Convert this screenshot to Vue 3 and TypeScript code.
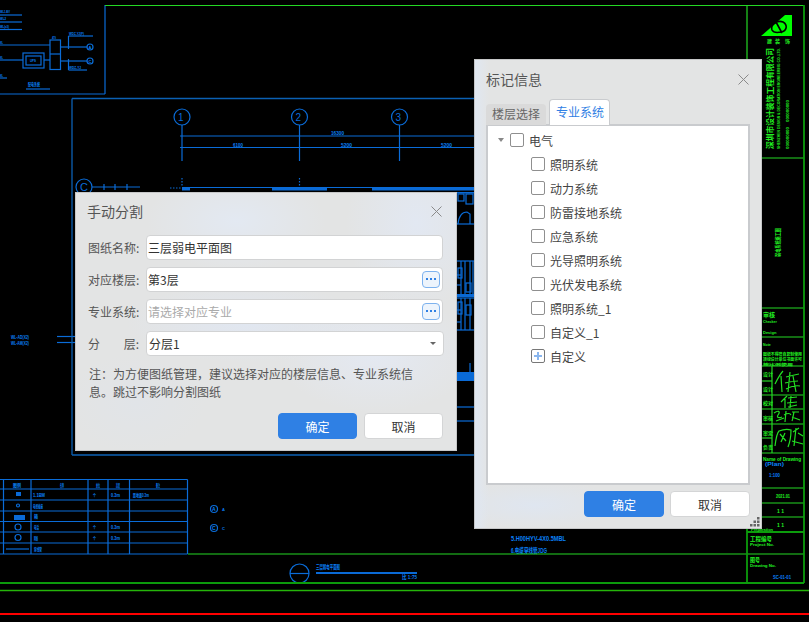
<script setup lang="ts">
import { ref } from 'vue';

type Seg = [number, number, number, number];
type Note = { x: number; y: number; s: number; t: string; w?: number };

const name = ref('三层弱电平面图');
const floor = ref('第3层');

const systems = ['照明系统', '动力系统', '防雷接地系统', '应急系统', '光导照明系统', '光伏发电系统', '照明系统_1', '自定义_1'];

// cad drawing behind the dialogs, blue layer
const blueLines: Seg[] = [
    [0, 94, 105, 94], [105, 5, 105, 94],
    [0, 15, 22, 15], [0, 22, 22, 22], [0, 29.5, 22, 29.5],
    [0, 45, 50, 45], [0, 60, 23, 60], [44, 60, 50, 60], [50, 54, 60.5, 54],
    [60.5, 47, 87, 47], [60.5, 61, 87, 61], [68.5, 36, 68.5, 49], [68.5, 59, 68.5, 70],
    [68.5, 36, 93, 36], [68.5, 70, 87, 70], [0, 78, 7, 78], [26, 89, 50, 89],
    [182, 125, 182, 161], [299.5, 125, 299.5, 161], [399.5, 125, 399.5, 161],
    [180, 136, 474, 136], [180, 147.5, 474, 147.5], [182, 187.5, 474, 187.5],
    [92, 187, 140, 187], [104, 184, 104, 190], [115, 184, 115, 190], [127, 184, 127, 190],
    [57, 336.5, 75, 336.5], [57, 342.5, 75, 342.5],
    [457, 261, 474, 261], [461, 261, 461, 294], [465, 261, 465, 294], [470, 261, 470, 294], [473, 261, 473, 294],
    [457, 298, 474, 298], [461, 298, 461, 330], [465, 298, 465, 330], [470, 298, 470, 330], [457, 330, 474, 330],
    [457, 275, 461, 275], [457, 285, 461, 285], [457, 310, 461, 310], [457, 322, 461, 322],
    [457, 407, 474, 407], [457, 421, 474, 421], [470, 363, 470, 372], [457, 224, 474, 224],
    [0, 479.5, 187.5, 479.5], [0, 489, 187.5, 489], [0, 500, 187.5, 500], [0, 511, 187.5, 511],
    [0, 521.5, 187.5, 521.5], [0, 532, 187.5, 532], [0, 543, 187.5, 543], [0, 554, 187.5, 554],
    [3.5, 479.5, 3.5, 554], [31, 479.5, 31, 554], [88, 479.5, 88, 554], [108, 479.5, 108, 554],
    [129.5, 479.5, 129.5, 554], [187.5, 479.5, 187.5, 554],
    [6, 549, 29, 549], [290, 573.5, 309, 573.5],
];
const blueBars: Seg[] = [
    [182, 187.5, 8, 3], [272, 187.5, 55, 3], [372, 187.5, 102, 3],
    [457, 188, 17, 2], [457, 192, 17, 1.5], [457, 294, 17, 3], [457, 372, 17, 9], [316, 572, 101, 2],
    [14, 515, 11, 5], [16, 492, 5, 4],
];
const darkBlueLines: Seg[] = [[72, 98.5, 474, 98.5], [72, 98.5, 72, 455], [72, 455, 474, 455]];
const circles: [number, number, number][] = [
    [182, 117, 8], [299.5, 117, 8], [399.5, 117, 8], [84, 187, 8],
    [90, 47, 3], [90, 61, 3], [214, 509, 3.5], [214, 528, 3.5], [299.5, 573.5, 9.5],
    [18, 527, 3], [18, 537.5, 3], [18, 505.5, 1.5],
];
const boxes: Seg[] = [
    [23, 53, 21, 15], [26, 56, 15, 9], [50, 40, 10.5, 29.5],
    [458, 194, 6, 7], [466, 194, 7, 10], [458, 268, 4, 10], [466, 283, 5, 9], [458, 302, 4, 12], [466, 305, 5, 10],
];
const axisLabels: Note[] = [
    { x: 178, y: 120.5, s: 10, t: '1' }, { x: 295.5, y: 120.5, s: 10, t: '2' }, { x: 395.5, y: 120.5, s: 10, t: '3' },
    { x: 80, y: 191, s: 11, t: 'C' },
];
const blueTexts: Note[] = [
    { x: 331, y: 135, s: 6, t: '16300', w: 13 }, { x: 233, y: 147, s: 6, t: '6100', w: 10 },
    { x: 341, y: 147, s: 6, t: '5200', w: 11 }, { x: 441, y: 147, s: 6, t: '5200', w: 11 },
    { x: 0, y: 13, s: 4, t: 'WL1-BV', w: 10 }, { x: 0, y: 20, s: 4, t: 'WL2', w: 6 }, { x: 0, y: 28, s: 4, t: 'WL(x3)', w: 9 },
    { x: 0, y: 44, s: 4, t: 'WL', w: 3 }, { x: 0, y: 59, s: 4, t: 'WL', w: 3 }, { x: 0, y: 77, s: 4, t: 'WL', w: 3 },
    { x: 52, y: 39, s: 4, t: 'ATS', w: 4 }, { x: 69, y: 34.5, s: 4, t: 'WDZ-YJ(F)', w: 15 }, { x: 69, y: 68.5, s: 4, t: 'WDZ-YJ', w: 12 },
    { x: 30, y: 61.5, s: 4, t: 'UPS', w: 6 }, { x: 28, y: 86, s: 4.5, t: '配电系统', w: 12 },
    { x: 88.5, y: 48.5, s: 4, t: 'A' }, { x: 88.5, y: 62.5, s: 4, t: 'C' },
    { x: 11, y: 338.5, s: 5, t: 'WL-AD(X2)', w: 18 }, { x: 11, y: 344.5, s: 5, t: 'WL-AM(X2)', w: 18 },
    { x: 13, y: 486.5, s: 4.5, t: '图例', w: 8 }, { x: 60, y: 486.5, s: 4.5, t: '名称', w: 4 }, { x: 96, y: 486.5, s: 4.5, t: '单位', w: 4 },
    { x: 116, y: 486.5, s: 4.5, t: '高度', w: 4 }, { x: 156, y: 486.5, s: 4.5, t: '备注', w: 4 },
    { x: 33, y: 497, s: 4.5, t: '1.1BM', w: 12 }, { x: 33, y: 508, s: 4.5, t: '电视插座', w: 10 }, { x: 34, y: 518, s: 4.5, t: '箱', w: 4 },
    { x: 34, y: 529, s: 4.5, t: '电话', w: 5 }, { x: 34, y: 540, s: 4.5, t: '网络', w: 4 }, { x: 34, y: 551, s: 4.5, t: '穿线管', w: 8 },
    { x: 93, y: 497, s: 4.5, t: '个', w: 3 }, { x: 93, y: 529, s: 4.5, t: '个', w: 3 }, { x: 93, y: 540, s: 4.5, t: '个', w: 3 },
    { x: 111, y: 497, s: 4.5, t: '0.3m', w: 9 }, { x: 111, y: 529, s: 4.5, t: '0.3m', w: 9 }, { x: 111, y: 540, s: 4.5, t: '0.3m', w: 9 },
    { x: 133, y: 497, s: 4.5, t: '距地面0.3m', w: 16 },
    { x: 212, y: 511, s: 5, t: 'A' }, { x: 212, y: 530, s: 5, t: 'C' }, { x: 222, y: 511, s: 4, t: 'A' }, { x: 222, y: 530, s: 4, t: 'C' },
    { x: 316, y: 569, s: 5.5, t: '三层弱电平面图', w: 24 }, { x: 402, y: 579, s: 5.5, t: '比 1:75', w: 15 },
    { x: 511, y: 541, s: 7, t: '5.H00HYV-4X0.5MBL', w: 55 }, { x: 511, y: 553, s: 7, t: '6.电缆穿线管JDG', w: 36 },
    { x: 765, y: 466, s: 5, t: '(Plan)', w: 19 }, { x: 769, y: 477, s: 5, t: '1:100', w: 11 }, { x: 773, y: 579, s: 5, t: 'SC-01-01', w: 18 },
];

// green layer, title block on the right
const greenLines: Seg[] = [
    [105, 5.5, 804, 5.5], [747, 5, 747, 59], [762, 158, 804, 158],
    [762, 308, 804, 308], [762, 337, 804, 337], [762, 366, 804, 366], [762, 395, 804, 395],
    [762, 409, 804, 409], [762, 424, 804, 424], [762, 453, 804, 453], [762, 488, 804, 488],
    [762, 503, 804, 503], [762, 517, 804, 517], [772, 366, 772, 453], [762, 381, 772, 381], [762, 438, 772, 438],
    [188, 554, 804, 554],
];
const thickGreen: Seg[] = [[804, 5, 804, 583], [747, 529, 747, 583], [747, 532, 804, 532], [0, 583, 804, 583]];
const greenTexts: Note[] = [
    { x: 767, y: 43, s: 5, t: '建' }, { x: 775, y: 43, s: 5, t: '装' }, { x: 785, y: 43, s: 5, t: '饰' },
    { x: 763, y: 317, s: 6, t: '审核' }, { x: 763, y: 323, s: 3.5, t: 'Checker' }, { x: 763, y: 334, s: 4, t: 'Design' },
    { x: 763, y: 346, s: 3.5, t: 'Note' }, { x: 763, y: 356, s: 4, t: '图纸不得擅自复制使用', w: 39 },
    { x: 763, y: 361, s: 4, t: '须经设计单位书面许可', w: 39 }, { x: 763, y: 365.5, s: 3.5, t: '按比例使用', w: 30 },
    { x: 763, y: 376, s: 5, t: '设计' }, { x: 763, y: 391, s: 5, t: '设计' }, { x: 763, y: 405, s: 5, t: '校对' },
    { x: 763, y: 420, s: 5, t: '审核' }, { x: 763, y: 435, s: 5, t: '审定' }, { x: 763, y: 449, s: 5, t: '负责' },
    { x: 763, y: 461, s: 4.5, t: 'Name of Drawing', w: 38 }, { x: 776, y: 498, s: 6, t: '2021.01', w: 14 },
    { x: 777, y: 513, s: 5, t: '1   1' }, { x: 777, y: 527, s: 5, t: '1   1' }, { x: 751, y: 531, s: 3.5, t: 'Preparation', w: 22 },
    { x: 750, y: 541, s: 6, t: '工程编号', w: 22 }, { x: 750, y: 546, s: 4, t: 'Project No.', w: 24 },
    { x: 750, y: 562, s: 6, t: '图号', w: 10 }, { x: 750, y: 567, s: 4, t: 'Drawing No.', w: 26 },
];
const verticalTexts: Note[] = [
    { x: 773, y: 149, s: 8, t: '深圳市设计装饰工程有限公司', w: 101 },
    { x: 780, y: 149, s: 4, t: 'SHENZHEN DESIGN & DECORATION ENGINEERING CO.,LTD.', w: 101 },
    { x: 789, y: 149, s: 4, t: '000000000', w: 22 }, { x: 789, y: 122, s: 4, t: '000000000', w: 22 },
    { x: 780, y: 257, s: 6, t: '弱电系统施工图', w: 29 },
];
const signatures = [
    'M775 384 C778 378 780 374 783 371 M781 376 L782 392 M786 377 C790 376 794 375 799 374 M790 372 L788 392 M785 383 C790 382 794 381 798 381 M786 389 C790 387 795 385 800 386 M793 376 L796 392',
    'M781 402 C783 400 785 398 787 396 M785 399 L785 408 M788 398 L797 397 M791 396 L790 408 M787 403 L797 402 M788 407 L797 405',
    'M774 413 C778 410 781 411 778 415 C776 418 780 418 782 417 M776 421 L784 418 M786 411 L785 422 M784 415 C788 413 790 413 791 415 M792 412 L799 412 M794 412 C793 416 793 419 792 421 M792 417 L800 420',
    'M775 446 C776 438 777 433 779 431 C784 429 788 429 791 430 C791 436 790 442 788 447 M780 434 L786 441 M785 433 L781 442 M793 432 L799 428 M796 428 L794 446 M798 433 L803 436 M792 441 L803 444',
];
</script>

<template>
    <div class="desktop">
        <svg class="cad" width="809" height="622" viewBox="0 0 809 622">
            <g class="blue">
                <line v-for="(l, i) in blueLines" :key="i" :x1="l[0]" :y1="l[1]" :x2="l[2]" :y2="l[3]" />
                <circle v-for="(c, i) in circles" :key="i" :cx="c[0]" :cy="c[1]" :r="c[2]" />
                <rect v-for="(b, i) in boxes" :key="i" :x="b[0]" :y="b[1]" :width="b[2]" :height="b[3]" />
                <path d="M458 224 C459 214 464 212 467 212 L470 214 L470 224" />
                <line class="dash" x1="182" y1="178" x2="182" y2="187" />
                <line class="dash" x1="299.5" y1="178" x2="299.5" y2="187" />
                <line class="dash" x1="170" y1="188" x2="182" y2="188" />
            </g>
            <g class="dark-blue">
                <line v-for="(l, i) in darkBlueLines" :key="i" :x1="l[0]" :y1="l[1]" :x2="l[2]" :y2="l[3]" />
                <rect x="457" y="454" width="17" height="2" />
            </g>
            <rect v-for="(b, i) in blueBars" :key="i" class="fill-blue" :x="b[0]" :y="b[1]" :width="b[2]" :height="b[3]" />
            <text v-for="(t, i) in axisLabels" :key="i" class="t-axis" :x="t.x" :y="t.y" :font-size="t.s">{{ t.t }}</text>
            <text
                v-for="(t, i) in blueTexts"
                :key="i"
                class="t-blue"
                :x="t.x"
                :y="t.y"
                :font-size="t.s"
                :textLength="t.w"
                :lengthAdjust="t.w ? 'spacingAndGlyphs' : undefined"
            >{{ t.t }}</text>

            <g class="green">
                <line v-for="(l, i) in greenLines" :key="i" :x1="l[0]" :y1="l[1]" :x2="l[2]" :y2="l[3]" />
                <path v-for="(d, i) in signatures" :key="i" class="sign" :d="d" />
            </g>
            <g class="green-thick">
                <line v-for="(l, i) in thickGreen" :key="i" :x1="l[0]" :y1="l[1]" :x2="l[2]" :y2="l[3]" />
            </g>
            <line class="green-line" x1="0" y1="590.5" x2="809" y2="590.5" />
            <line class="red-line" x1="0" y1="614" x2="809" y2="614" />

            <polygon class="logo" points="761,36 785,15 792,15 792,36" />
            <path class="logo-mark" d="M772 30 C770 24 778 20 783 22 C788 25 787 31 781 32 C776 33 773 32 772 30 Z M776 22 L782 33" />
            <text
                v-for="(t, i) in greenTexts"
                :key="i"
                class="t-green"
                :x="t.x"
                :y="t.y"
                :font-size="t.s"
                :textLength="t.w"
                :lengthAdjust="t.w ? 'spacingAndGlyphs' : undefined"
            >{{ t.t }}</text>
            <text
                v-for="(t, i) in verticalTexts"
                :key="i"
                class="t-green"
                :transform="`translate(${t.x} ${t.y}) rotate(-90)`"
                :font-size="t.s"
                :textLength="t.w"
                lengthAdjust="spacingAndGlyphs"
            >{{ t.t }}</text>
        </svg>

        <section class="dialog split">
            <header class="head">
                <span class="title">手动分割</span>
                <svg class="close" width="11" height="11" viewBox="0 0 11 11"><path d="M.5.5l10 10M10.500.5l-10 10" /></svg>
            </header>
            <div class="form">
                <label class="label">图纸名称:</label>
                <div class="field"><input v-model="name" /></div>
                <label class="label">对应楼层:</label>
                <div class="field">
                    <input v-model="floor" />
                    <button class="more"><i></i><i></i><i></i></button>
                </div>
                <label class="label">专业系统:</label>
                <div class="field">
                    <input placeholder="请选择对应专业" />
                    <button class="more"><i></i><i></i><i></i></button>
                </div>
                <label class="label spread"><span>分</span><span>层:</span></label>
                <div class="field select">
                    <span>分层1</span>
                    <b class="caret"></b>
                </div>
            </div>
            <p class="note">注&#65306;为方便图纸管理&#65292;建议选择对应的楼层信息、专业系统信息。跳过不影响分割图纸</p>
            <footer class="actions">
                <button class="btn primary">确定</button>
                <button class="btn">取消</button>
            </footer>
        </section>

        <section class="dialog mark">
            <header class="head">
                <span class="title">标记信息</span>
                <svg class="close" width="11" height="11" viewBox="0 0 11 11"><path d="M.5.5l10 10M10.500.5l-10 10" /></svg>
            </header>
            <div class="tabs">
                <span class="tab">楼层选择</span>
                <span class="tab active">专业系统</span>
            </div>
            <div class="tree">
                <div class="row parent">
                    <b class="arrow"></b>
                    <span class="check"></span>
                    <span>电气</span>
                </div>
                <div v-for="s in systems" :key="s" class="row child">
                    <span class="check"></span>
                    <span>{{ s }}</span>
                </div>
                <div class="row child">
                    <span class="check plus"></span>
                    <span>自定义</span>
                </div>
            </div>
            <footer class="actions">
                <button class="btn primary">确定</button>
                <button class="btn">取消</button>
            </footer>
            <svg class="grip" width="10" height="10" viewBox="0 0 10 10">
                <rect x="7" y="0" width="2.500" height="2.500" />
                <rect x="3.500" y="3.500" width="2.500" height="2.500" />
                <rect x="7" y="3.500" width="2.500" height="2.500" />
                <rect x="0" y="7" width="2.500" height="2.500" />
                <rect x="3.500" y="7" width="2.500" height="2.500" />
                <rect x="7" y="7" width="2.500" height="2.500" />
            </svg>
        </section>
    </div>
</template>

<style scoped>
.desktop {
    position: relative;
    width: 809px;
    height: 622px;
    overflow: hidden;
    background: #000;
    font-family: "Noto Sans CJK SC", "Liberation Sans", sans-serif;
    font-size: 12px;
    color: #333;
}

.cad {
    position: absolute;
    left: 0;
    top: 0;
    display: block;
}

.blue line, .blue circle, .blue rect, .blue path {
    fill: none;
    stroke: #0a6cd8;
    stroke-width: 1.2;
}

.blue .dash {
    stroke-dasharray: 1.5 1.5;
}

.dark-blue line {
    stroke: #0b60b4;
    stroke-width: 1.3;
}

.dark-blue rect {
    fill: #0b4a88;
}

.fill-blue {
    fill: #0a6ad6;
}

.t-axis {
    fill: #0a6cd8;
    font-family: "Liberation Sans", sans-serif;
}

.t-blue {
    fill: #0a80f8;
    font-weight: 700;
    font-family: "Liberation Sans", "Noto Sans CJK SC", sans-serif;
}

.green line {
    stroke: #24d824;
    stroke-width: 1.2;
}

.green .sign {
    fill: none;
    stroke: #22e022;
    stroke-width: 1.2;
}

.green-thick line {
    stroke: #0c9c0c;
    stroke-width: 1.8;
}

.green-line {
    stroke: #25b40a;
    stroke-width: 1.4;
}

.red-line {
    stroke: #f00;
    stroke-width: 2;
}

.logo {
    fill: #0f0;
}

.logo-mark {
    fill: none;
    stroke: #000;
    stroke-width: 1.6;
}

.t-green {
    fill: #22f022;
    font-weight: 700;
    font-family: "Liberation Sans", "Noto Sans CJK SC", sans-serif;
}

.dialog {
    position: absolute;
    box-sizing: border-box;
    display: flex;
    flex-direction: column;
    border: 1px solid #c6c7c8;
    background-color: #e3e4e4;
}

.split {
    left: 75px;
    top: 192px;
    width: 382px;
    height: 259px;
    padding: 0 13px 11px 12px;
    background-image:
        radial-gradient(ellipse 90px 50px at 160px 28px, #e3e9f2, transparent),
        radial-gradient(ellipse 70px 90px at 340px 30px, #e2e8f2, transparent),
        radial-gradient(ellipse 120px 40px at 170px 130px, #e1e7f1, transparent),
        radial-gradient(ellipse 100px 60px at 300px 160px, #e4e9f2, transparent),
        radial-gradient(ellipse 70px 50px at 60px 210px, #e1e4e8, transparent);
}

.split .head {
    height: 36px;
}

.split .title {
    margin-left: -1px;
}

.split .actions {
    gap: 7px;
}

.split .btn {
    width: 79px;
}

.mark {
    left: 474px;
    top: 59px;
    width: 288px;
    height: 470px;
    padding: 0 11px 11px 11px;
    background-image:
        linear-gradient(90deg, #e0e7f1, transparent 14px),
        radial-gradient(ellipse 90px 24px at 60px 445px, #dfe6f0, transparent);
}

.head {
    display: flex;
    align-items: center;
    justify-content: space-between;
    height: 38px;
    flex: none;
}

.title {
    font-size: 14px;
    color: #555;
}

.close {
    margin-right: 1px;
}

.close path {
    fill: none;
    stroke: #8a8a8a;
    stroke-width: 1;
}

.form {
    display: grid;
    grid-template-columns: 58px 1fr;
    grid-auto-rows: 24px;
    row-gap: 8px;
    margin-top: 6px;
    align-items: center;
}

.label {
    color: #555;
    white-space: nowrap;
}

.spread {
    display: flex;
    justify-content: space-between;
    width: 51px;
}

.field {
    display: flex;
    align-items: center;
    box-sizing: border-box;
    height: 25px;
    background: #fff;
    border: 1px solid #d2d3d4;
    border-radius: 4px;
    padding: 0 2px 0 1px;
}

.field input {
    flex: 1;
    min-width: 0;
    border: none;
    outline: none;
    padding: 0;
    background: none;
    font: inherit;
    color: #333;
}

.field input::placeholder {
    color: #aaa;
}

.select {
    justify-content: space-between;
    padding: 0 7px 0 2px;
    margin-right: -1px;
}

.caret {
    width: 0;
    height: 0;
    border-left: 3px solid transparent;
    border-right: 3px solid transparent;
    border-top: 3px solid #666;
}

.more {
    display: flex;
    align-items: center;
    justify-content: center;
    gap: 2px;
    width: 18px;
    height: 17px;
    padding: 0;
    box-sizing: border-box;
    border: 1px solid #7db2ee;
    border-radius: 4px;
    background: #edf4fc;
}

.more i {
    width: 2px;
    height: 2px;
    background: #2f80e4;
}

.note {
    margin: 10px 30px 0 1px;
    line-height: 18px;
    color: #555;
}

.actions {
    display: flex;
    justify-content: flex-end;
    gap: 6px;
    margin-top: auto;
}

.btn {
    box-sizing: border-box;
    width: 80px;
    height: 26px;
    padding: 0;
    border: 1px solid #d4d5d6;
    border-radius: 4px;
    background: #fff;
    color: #333;
    font: inherit;
}

.primary {
    border-color: #2f80e4;
    background: #2f80e4;
    color: #fff;
}

.tabs {
    display: flex;
    align-items: flex-end;
    gap: 3px;
    height: 26px;
    margin-top: 1px;
    flex: none;
    position: relative;
    z-index: 1;
    margin-bottom: -1px;
}

.tab {
    box-sizing: border-box;
    width: 60px;
    height: 21px;
    line-height: 20px;
    padding-left: 6px;
    border-radius: 4px 4px 0 0;
    background: #dadada;
    color: #666;
}

.tab.active {
    width: 61px;
    height: 26px;
    line-height: 23px;
    border: 1px solid #c9cbce;
    border-bottom: none;
    background: #fff;
    color: #2f80e4;
}

.tree {
    box-sizing: border-box;
    height: 361px;
    flex: none;
    background: #fff;
    border: 2px solid #c9cbce;
    padding-top: 2px;
}

.row {
    display: flex;
    align-items: center;
    height: 24px;
    color: #444;
}

.parent {
    padding-left: 10px;
}

.child {
    padding-left: 43px;
}

.arrow {
    width: 0;
    height: 0;
    margin-right: 6px;
    border-left: 3.5px solid transparent;
    border-right: 3.5px solid transparent;
    border-top: 4px solid #888;
}

.check {
    box-sizing: border-box;
    width: 14px;
    height: 14px;
    margin-right: 5px;
    border: 1px solid #8f8f8f;
    border-radius: 2px;
    background: #fff;
}

.plus {
    border-color: #777;
    background:
        linear-gradient(#8ab6ee, #8ab6ee) center / 8px 2px no-repeat,
        linear-gradient(#8ab6ee, #8ab6ee) center / 2px 8px no-repeat,
        #fff;
}

.grip {
    position: absolute;
    right: 1px;
    bottom: 1px;
    fill: #666;
}
</style>

<style>
html, body {
    background: #000;
}
</style>
